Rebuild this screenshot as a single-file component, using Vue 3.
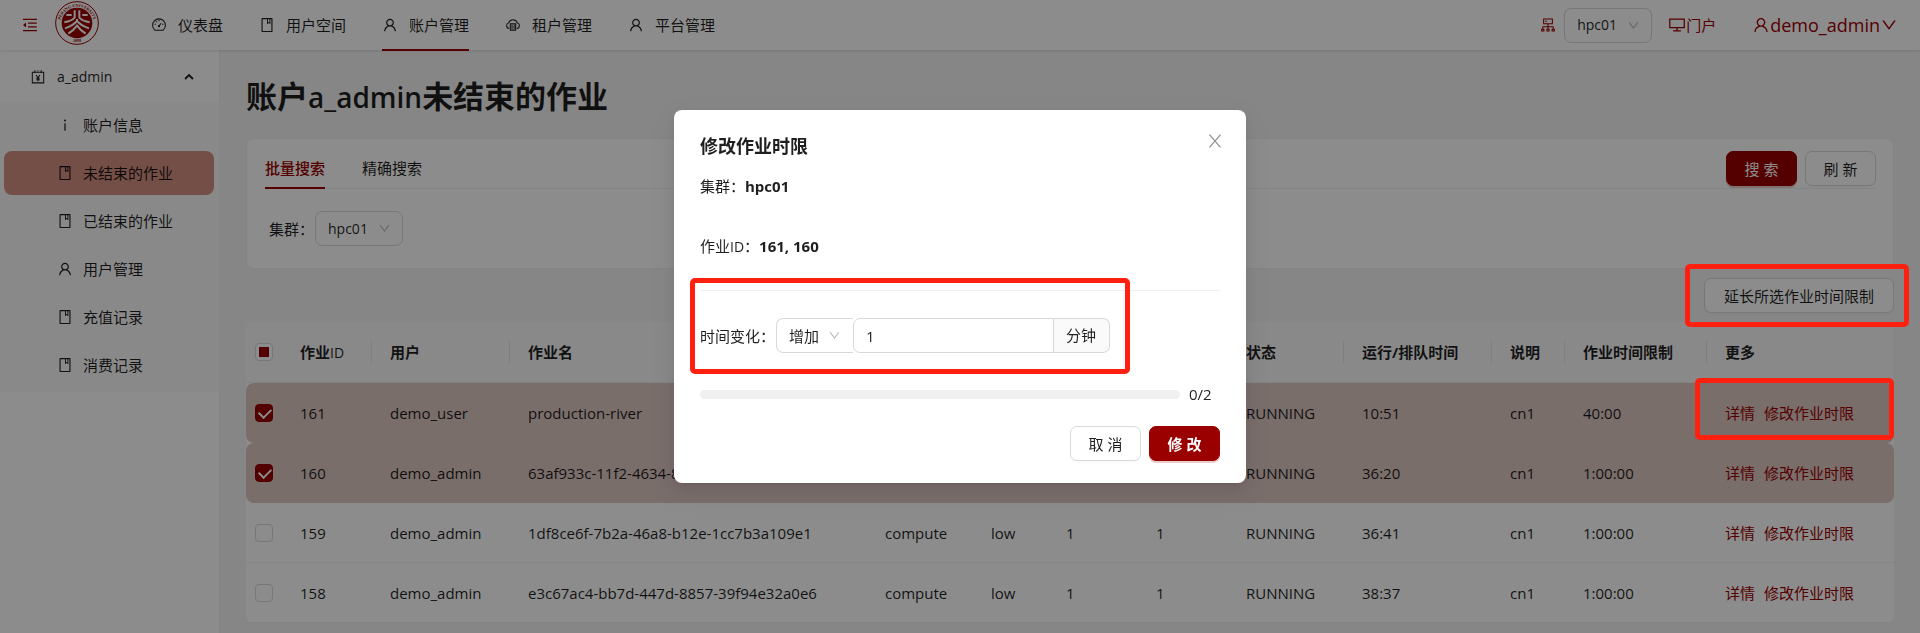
<script setup>
import { h, ref } from 'vue'

const filled = {
  down: 'M884 256h-75c-5.1 0-9.9 2.5-12.9 6.6L512 654.2 227.9 262.6c-3-4.1-7.8-6.6-12.9-6.6h-75c-6.5 0-10.3 7.4-6.5 12.7l352.6 486.1c12.8 17.6 39 17.6 51.7 0l352.6-486.1c3.9-5.3.1-12.7-6.4-12.7z',
  user: 'M858.5 763.6a374 374 0 00-80.6-119.5 375.63 375.63 0 00-119.5-80.6c-.4-.2-.8-.3-1.2-.5C719.5 518 760 444.7 760 362c0-137-111-248-248-248S264 225 264 362c0 82.7 40.5 156 102.8 201.1-.4.2-.8.3-1.2.5-44.8 18.9-85 46-119.5 80.6a375.63 375.63 0 00-80.6 119.5A371.7 371.7 0 00136 901.8a8 8 0 008 8.2h60c4.4 0 7.9-3.5 8-7.8 2-77.2 33-149.5 87.8-204.3 56.7-56.7 132-87.9 212.2-87.9s155.5 31.2 212.2 87.9C779 752.7 810 825 812 902.2c.1 4.4 3.6 7.8 8 7.8h60a8 8 0 008-8.2c-1-47.8-10.9-94.3-29.5-138.2zM512 534c-45.9 0-89.1-17.9-121.6-50.4S340 407.9 340 362c0-45.9 17.9-89.1 50.4-121.6S466.1 190 512 190s89.1 17.9 121.6 50.4S684 316.1 684 362c0 45.9-17.9 89.1-50.4 121.6S557.9 534 512 534z',
  book: 'M832 64H192c-17.7 0-32 14.3-32 32v832c0 17.7 14.3 32 32 32h640c17.7 0 32-14.3 32-32V96c0-17.7-14.3-32-32-32zm-260 72h96v209.9L621.5 312 572 347.4V136zm220 752H232V136h280v296.9c0 3.3 1 6.6 3 9.3a15.9 15.9 0 0022.3 3.7l83.8-59.9 81.4 59.4c2.7 2 6 3.1 9.4 3.1 8.8 0 16-7.2 16-16V136h64v752z',
  fold: 'M408 442h480c4.4 0 8-3.6 8-8v-56c0-4.4-3.6-8-8-8H408c-4.4 0-8 3.6-8 8v56c0 4.4 3.6 8 8 8zm-8 204c0 4.4 3.6 8 8 8h480c4.4 0 8-3.6 8-8v-56c0-4.4-3.6-8-8-8H408c-4.4 0-8 3.6-8 8v56zm504-486H120c-4.4 0-8 3.6-8 8v56c0 4.4 3.6 8 8 8h784c4.4 0 8-3.6 8-8v-56c0-4.4-3.6-8-8-8zm0 632H120c-4.4 0-8 3.6-8 8v56c0 4.4 3.6 8 8 8h784c4.4 0 8-3.6 8-8v-56c0-4.4-3.6-8-8-8zM115.4 518.9L271.7 642c5.8 4.6 14.4.5 14.4-6.9V388.9c0-7.4-8.5-11.5-14.4-6.9L115.4 505.1a8.74 8.74 0 000 13.8z',
  info: 'M448 224a64 64 0 10128 0 64 64 0 10-128 0zm96 168h-64c-4.4 0-8 3.6-8 8v464c0 4.4 3.6 8 8 8h64c4.4 0 8-3.6 8-8V400c0-4.4-3.6-8-8-8z',
  desktop: 'M928 140H96c-17.7 0-32 14.3-32 32v496c0 17.7 14.3 32 32 32h380v112H304c-8.8 0-16 7.2-16 16v48c0 4.4 3.6 8 8 8h432c4.4 0 8-3.6 8-8v-48c0-8.8-7.2-16-16-16H548V700h380c17.7 0 32-14.3 32-32V172c0-17.7-14.3-32-32-32zm-40 488H136V212h752v416z',
}
const stroked = {
  dashboard: 'M250 850A412 412 0 1 1 774 850ZM512 190v80M235 470h80M709 470h80M316 274l56 56M500 590l150 -190M470 590a40 40 0 1 0 80 0a40 40 0 1 0 -80 0',
  cloud: 'M270 740A190 190 0 0 1 240 370A290 290 0 0 1 784 370A190 190 0 0 1 754 740M340 440h344v400h-344ZM340 640h344M420 540h60M420 740h60M560 540h60M560 740h60',
  cluster: 'M232 130h560v300h-560ZM512 430v200M180 790v-160h664v160M512 630v160M110 790h140v100h-140ZM442 790h140v100h-140ZM774 790h140v100h-140ZM340 280h90',
  account: 'M148 210h728v678h-728ZM310 80v180M512 80v60M714 80v180M390 380l122 180l122 -180M512 560v230M400 590h224M400 690h224',
  up: 'M260 640L512 390L764 640',
  close: 'M200 150L824 874M824 150L200 874',
}
const Icon = (props) =>
  h('svg', { class: 'icon', viewBox: '0 0 1024 1024', 'aria-hidden': 'true' }, [
    filled[props.name]
      ? h('path', { d: filled[props.name], fill: 'currentColor' })
      : h('path', {
          d: stroked[props.name],
          fill: 'none',
          stroke: 'currentColor',
          'stroke-width': props.name === 'up' ? 120 : 66,
        }),
  ])
Icon.props = ['name']

const nav = [
  { icon: 'dashboard', label: '仪表盘' },
  { icon: 'book', label: '用户空间' },
  { icon: 'user', label: '账户管理', active: true },
  { icon: 'cloud', label: '租户管理' },
  { icon: 'user', label: '平台管理' },
]
const side = [
  { icon: 'info', label: '账户信息' },
  { icon: 'book', label: '未结束的作业', active: true },
  { icon: 'book', label: '已结束的作业' },
  { icon: 'user', label: '用户管理' },
  { icon: 'book', label: '充值记录' },
  { icon: 'book', label: '消费记录' },
]
const jobs = ref([
  { id: '161', user: 'demo_user', name: 'production-river', time: '10:51', limit: '40:00', checked: true, marked: true },
  { id: '160', user: 'demo_admin', name: '63af933c-11f2-4634-8', time: '36:20', limit: '1:00:00', checked: true },
  { id: '159', user: 'demo_admin', name: '1df8ce6f-7b2a-46a8-b12e-1cc7b3a109e1', time: '36:41', limit: '1:00:00', checked: false },
  { id: '158', user: 'demo_admin', name: 'e3c67ac4-bb7d-447d-8857-39f94e32a0e6', time: '38:37', limit: '1:00:00', checked: false },
])
const amount = ref('1')
</script>

<template>
  <div class="page">
    <header class="topbar">
      <button class="fold" type="button" aria-label="收起菜单"><Icon name="fold" /></button>
      <svg class="logo" viewBox="0 0 132 132" role="img" aria-label="PEKING UNIVERSITY">
        <circle cx="66" cy="66" r="64" fill="#fff" stroke="#9b0000" stroke-width="3" />
        <circle cx="66" cy="66" r="46" fill="#9b0000" />
        <path id="ring-top" d="M19.200 85A50 50 0 1 1 112.800 85" fill="none" />
        <path id="ring-bottom" d="M26 108A60 60 0 0 0 106 108" fill="none" />
        <text class="seal"><textPath href="#ring-top" startOffset="50%" text-anchor="middle">PEKING UNIVERSITY</textPath></text>
        <text class="seal"><textPath href="#ring-bottom" startOffset="50%" text-anchor="middle">1898</textPath></text>
        <g fill="none" stroke="#fff" stroke-width="6">
          <path d="M59 28V50Q50 60 28 64" />
          <path d="M73 28V50Q82 60 104 64" />
          <path d="M34 42H50" />
          <path d="M98 42H82" />
          <path d="M66 54V62" />
          <path d="M30 82Q54 74 66 60Q78 74 102 82" />
          <path d="M40 98Q56 88 66 74Q76 88 92 98" />
        </g>
      </svg>
      <nav class="nav">
        <a v-for="n in nav" :key="n.label" href="#" :class="{ active: n.active }"><Icon :name="n.icon" />{{ n.label }}</a>
      </nav>
      <div class="tools">
        <Icon name="cluster" />
        <span class="select">
          <select aria-label="集群"><option>hpc01</option></select>
          <Icon name="down" />
        </span>
        <a class="portal" href="#"><Icon name="desktop" />门户</a>
        <button class="account" type="button"><Icon name="user" />demo_admin<Icon name="down" /></button>
      </div>
    </header>

    <div class="body">
      <aside class="side">
        <button class="group" type="button"><Icon name="account" /><span class="latin">a_admin</span><Icon name="up" /></button>
        <nav class="sub">
          <a v-for="s in side" :key="s.label" href="#" :class="{ active: s.active }"><Icon :name="s.icon" />{{ s.label }}</a>
        </nav>
      </aside>

      <main class="main">
        <h1>账户<span>a_admin</span>未结束的作业</h1>

        <section class="card">
          <div class="tabs">
            <button class="tab active" type="button">批量搜索</button>
            <button class="tab" type="button">精确搜索</button>
            <div class="actions">
              <button class="btn primary" type="button">搜 索</button>
              <button class="btn" type="button">刷 新</button>
            </div>
          </div>
          <div class="filter">
            <label for="cluster">集群：</label>
            <span class="select">
              <select id="cluster"><option>hpc01</option></select>
              <Icon name="down" />
            </span>
          </div>
        </section>

        <div class="bulk">
          <div class="bulk-box">
            <button class="btn" type="button">延长所选作业时间限制</button>
            <i class="mark"></i>
          </div>
        </div>

        <table class="jobs">
          <colgroup>
            <col class="w-check" /><col class="w-id" /><col class="w-user" /><col />
            <col class="w-part" /><col class="w-qos" /><col class="w-num" /><col class="w-num" />
            <col class="w-state" /><col class="w-time" /><col class="w-note" /><col class="w-limit" /><col class="w-more" />
          </colgroup>
          <thead>
            <tr>
              <th class="check"><input class="box some" type="checkbox" aria-label="全选" /></th>
              <th>作业<span class="latin">ID</span></th>
              <th>用户</th>
              <th>作业名</th>
              <th>分区</th>
              <th><span class="latin">QOS</span></th>
              <th>节点数</th>
              <th>核心数</th>
              <th>状态</th>
              <th>运行/排队时间</th>
              <th>说明</th>
              <th>作业时间限制</th>
              <th>更多</th>
            </tr>
          </thead>
          <tbody>
            <tr v-for="j in jobs" :key="j.id" :class="{ picked: j.checked }">
              <td class="check"><input v-model="j.checked" class="box" type="checkbox" :aria-label="'作业' + j.id" /></td>
              <td>{{ j.id }}</td>
              <td>{{ j.user }}</td>
              <td>{{ j.name }}</td>
              <td>compute</td>
              <td>low</td>
              <td>1</td>
              <td>1</td>
              <td>RUNNING</td>
              <td>{{ j.time }}</td>
              <td>cn1</td>
              <td>{{ j.limit }}</td>
              <td class="more">
                <div class="links"><a href="#">详情</a><a href="#">修改作业时限</a></div>
                <i v-if="j.marked" class="mark"></i>
              </td>
            </tr>
          </tbody>
        </table>
      </main>
    </div>

    <div class="mask">
      <div class="modal" role="dialog" aria-labelledby="dlg-title">
        <div class="head">
          <h2 id="dlg-title">修改作业时限</h2>
          <button class="close" type="button" aria-label="关闭"><Icon name="close" /></button>
        </div>
        <p>集群：<b>hpc01</b></p>
        <p class="ids">作业<span class="latin">ID</span>：<b>161, 160</b></p>
        <hr />
        <div class="change">
          <label for="amount">时间变化：</label>
          <span class="select joined">
            <select aria-label="增加或减少"><option>增加</option></select>
            <Icon name="down" />
          </span>
          <input id="amount" v-model="amount" type="text" />
          <span class="unit">分钟</span>
          <i class="mark"></i>
        </div>
        <div class="progress"><div class="bar"></div><span>0/2</span></div>
        <div class="foot">
          <button class="btn" type="button">取 消</button>
          <button class="btn primary strong" type="button">修 改</button>
        </div>
      </div>
    </div>
  </div>
</template>

<style>
body {
  margin: 0;
}
.icon {
  width: 16px;
  height: 16px;
  flex: none;
  display: block;
}
</style>

<style scoped>
.page {
  display: flex;
  flex-direction: column;
  min-height: 100vh;
  background: #f5f5f5;
  color: rgba(0, 0, 0, 0.88);
  font-family: "Open Sans", "Noto Sans CJK SC", sans-serif;
  font-size: 15px;
  font-weight: 400;
  line-height: 24px;
}
.page * {
  box-sizing: border-box;
}
a {
  color: inherit;
  text-decoration: none;
}
button,
input,
select {
  font: inherit;
  color: inherit;
  margin: 0;
}
button {
  border: 0;
  padding: 0;
  background: none;
}
.latin {
  font-size: 14px;
  font-weight: 400;
  line-height: 1;
}

.topbar {
  display: flex;
  align-items: center;
  height: 50px;
  padding: 0 22px 0 21px;
  background: #fff;
  box-shadow: 0 1px 3px rgba(0, 0, 0, 0.12);
  position: relative;
}
.fold {
  color: #9b0000;
}
.fold .icon {
  width: 18px;
  height: 18px;
}
.logo {
  width: 44px;
  height: 44px;
  margin: 0 52px 4px 16px;
}
.seal {
  font-family: "Liberation Serif", serif;
  font-size: 13px;
  font-weight: 700;
  fill: #9b0000;
}
.nav {
  display: flex;
  flex: 1;
  gap: 36px;
  align-self: stretch;
}
.nav a {
  display: flex;
  align-items: center;
  gap: 11px;
  height: 51px;
  border-bottom: 2px solid transparent;
}
.nav a.active {
  border-color: #9b0000;
}
.tools {
  display: flex;
  align-items: center;
  color: #9b0000;
}
.portal,
.account {
  display: flex;
  align-items: center;
}
.portal {
  margin-left: 16px;
}
.portal .icon {
  width: 18px;
  height: 18px;
}
.account {
  margin-left: 36px;
  font-size: 18px;
}
.account .icon {
  width: 18px;
  height: 18px;
}

.select {
  display: inline-flex;
  position: relative;
}
.select select {
  appearance: none;
  width: 88px;
  height: 35px;
  padding: 0 12px;
  border: 1px solid #d9d9d9;
  border-radius: 7px;
  background: #fff;
  color: rgba(0, 0, 0, 0.88);
  font-size: 14px;
}
.select .icon {
  position: absolute;
  right: 12px;
  top: 11px;
  width: 13px;
  height: 13px;
  color: #b8b8b8;
  pointer-events: none;
}
.tools .select {
  margin-left: 8px;
}

.body {
  display: flex;
  flex: 1;
}
.side {
  flex: none;
  width: 220px;
  background: #fff;
  border-right: 1px solid #f0f0f0;
}
.group {
  display: flex;
  align-items: center;
  width: 100%;
  height: 52px;
  padding: 2px 22px 0 30px;
  gap: 11px;
  text-align: left;
}
.group span {
  flex: 1;
}
.sub {
  display: flex;
  flex-direction: column;
  gap: 4px;
  padding: 1px 5px 5px 4px;
  background: #fafafa;
}
.sub a {
  display: flex;
  align-items: center;
  gap: 10px;
  height: 44px;
  padding-left: 53px;
  border-radius: 8px;
}
.sub a.active {
  background: #d49084;
}

.main {
  flex: 1;
  min-width: 0;
  padding: 22px 26px 10px;
}
h1 {
  margin: 0 0 18px;
  font-size: 31px;
  font-weight: 700;
  line-height: 48px;
}
h1 span {
  font-size: 28px;
  font-weight: 600;
  line-height: 1;
}
.card {
  padding: 12px 17px 22px 18px;
  border: 1px solid #f0f0f0;
  border-radius: 8px;
  background: #fff;
}
.tabs {
  display: flex;
  gap: 37px;
  height: 38px;
  border-bottom: 1px solid #f0f0f0;
}
.tab {
  height: 38px;
  padding-bottom: 2px;
  border-bottom: 2px solid transparent;
}
.tab.active {
  color: #9b0000;
  font-weight: 500;
  border-color: #9b0000;
}
.actions {
  display: flex;
  gap: 8px;
  margin-left: auto;
}
.btn {
  height: 35px;
  min-width: 71px;
  padding: 0 16px;
  border: 1px solid #d9d9d9;
  border-radius: 7px;
  background: #fff;
  box-shadow: 0 2px 0 rgba(0, 0, 0, 0.02);
}
.btn.primary {
  border-color: #9b0000;
  background: #9b0000;
  color: #fff;
  box-shadow: 0 2px 0 rgba(155, 0, 0, 0.2);
}
.btn.strong {
  font-weight: 700;
}
.filter {
  display: flex;
  align-items: center;
  gap: 1px;
  padding: 22px 4px 0;
}
.bulk {
  display: flex;
  justify-content: flex-end;
  padding: 9px 0;
}
.bulk-box {
  position: relative;
}
.bulk .btn {
  display: block;
  min-width: 190px;
}
.mark {
  position: absolute;
  z-index: 20;
  border: 5px solid #ff2010;
  border-radius: 5px;
  pointer-events: none;
}
.bulk .mark {
  inset: -14px -15px -14px -19px;
}

.jobs {
  width: 100%;
  table-layout: fixed;
  border-collapse: separate;
  border-spacing: 0;
  border-radius: 8px;
  background: #fff;
}
.w-check { width: 36px; }
.w-id { width: 90px; }
.w-user { width: 138px; }
.w-part { width: 106px; }
.w-qos { width: 75px; }
.w-num { width: 90px; }
.w-state { width: 116px; }
.w-time { width: 148px; }
.w-note { width: 73px; }
.w-limit { width: 142px; }
.w-more { width: 187px; }
th,
td {
  position: relative;
  height: 60px;
  padding: 0 0 0 18px;
  border-bottom: 1px solid #f0f0f0;
  text-align: left;
  white-space: nowrap;
}
th {
  height: 61px;
  font-weight: 700;
  background: #fafafa;
}
th:first-child {
  border-top-left-radius: 8px;
}
th:last-child {
  border-top-right-radius: 8px;
}
th:not(:first-child):not(:last-child)::after {
  content: "";
  position: absolute;
  right: 0;
  top: 18px;
  width: 1px;
  height: 24px;
  background: #e8e8e8;
}
.check {
  padding-left: 9px;
}
.picked td {
  background: #dec8c4;
  border-color: #dec8c4;
}
.picked td:first-child {
  border-radius: 8px 0 0 8px;
}
.picked td:last-child {
  border-radius: 0 8px 8px 0;
}
.box {
  appearance: none;
  display: block;
  position: relative;
  width: 18px;
  height: 18px;
  border: 1px solid #d9d9d9;
  border-radius: 4px;
  background: #fff;
}
.box.some::after {
  content: "";
  position: absolute;
  inset: 3px;
  background: #9b0000;
}
.box:checked {
  background: #9b0000;
  border-color: #9b0000;
}
.box:checked::after {
  content: "";
  position: absolute;
  left: 5px;
  top: 1px;
  width: 6px;
  height: 10px;
  border: solid #fff;
  border-width: 0 2px 2px 0;
  transform: rotate(45deg);
}
.links {
  display: flex;
  gap: 9px;
  color: #9b0000;
}
.more .mark {
  inset: -5px 0 2px -12px;
}

.mask {
  position: fixed;
  inset: 0;
  z-index: 10;
  display: flex;
  align-items: flex-start;
  justify-content: center;
  padding-top: 110px;
  background: rgba(0, 0, 0, 0.45);
}
.modal {
  width: 572px;
  padding: 22px 26px;
  border-radius: 8px;
  background: #fff;
  box-shadow: 0 6px 16px rgba(0, 0, 0, 0.08), 0 3px 6px -4px rgba(0, 0, 0, 0.12), 0 9px 28px 8px rgba(0, 0, 0, 0.05);
}
.head {
  display: flex;
  justify-content: space-between;
  align-items: flex-start;
  margin: 0 -4px 14px 0;
}
h2 {
  margin: 0;
  font-size: 18px;
  font-weight: 700;
  line-height: 28px;
}
.close {
  color: #8c8c8c;
}
.close .icon {
  width: 18px;
  height: 18px;
}
.modal p {
  margin: 0 0 36px;
}
.modal p.ids {
  margin-bottom: 32px;
}
.modal b {
  font-weight: 700;
}
hr {
  margin: 0 0 27px;
  border: 0;
  border-top: 1px solid #f0f0f0;
}
.change {
  position: relative;
  display: flex;
  align-items: center;
  width: 410px;
}
.joined {
  margin-left: 1px;
}
.joined select {
  width: 77px;
  font-size: 15px;
  border-right: 0;
  border-radius: 7px 0 0 7px;
}
.change input {
  flex: 1;
  min-width: 0;
  height: 35px;
  padding: 0 12px;
  border: 1px solid #d9d9d9;
  border-radius: 7px 0 0 7px;
  background: #fff;
}
.unit {
  height: 35px;
  padding: 0 13px 0 12px;
  border: 1px solid #d9d9d9;
  border-left: 0;
  border-radius: 0 7px 7px 0;
  background: #fafafa;
  line-height: 33px;
}
.change .mark {
  inset: -40px -20px -21px -10px;
}
.progress {
  display: flex;
  align-items: center;
  gap: 9px;
  margin: 29px 0 20px;
}
.progress span {
  width: 31px;
}
.bar {
  flex: 1;
  height: 9px;
  border-radius: 5px;
  background: #f0f0f0;
}
.foot {
  display: flex;
  justify-content: flex-end;
  gap: 8px;
}
</style>
